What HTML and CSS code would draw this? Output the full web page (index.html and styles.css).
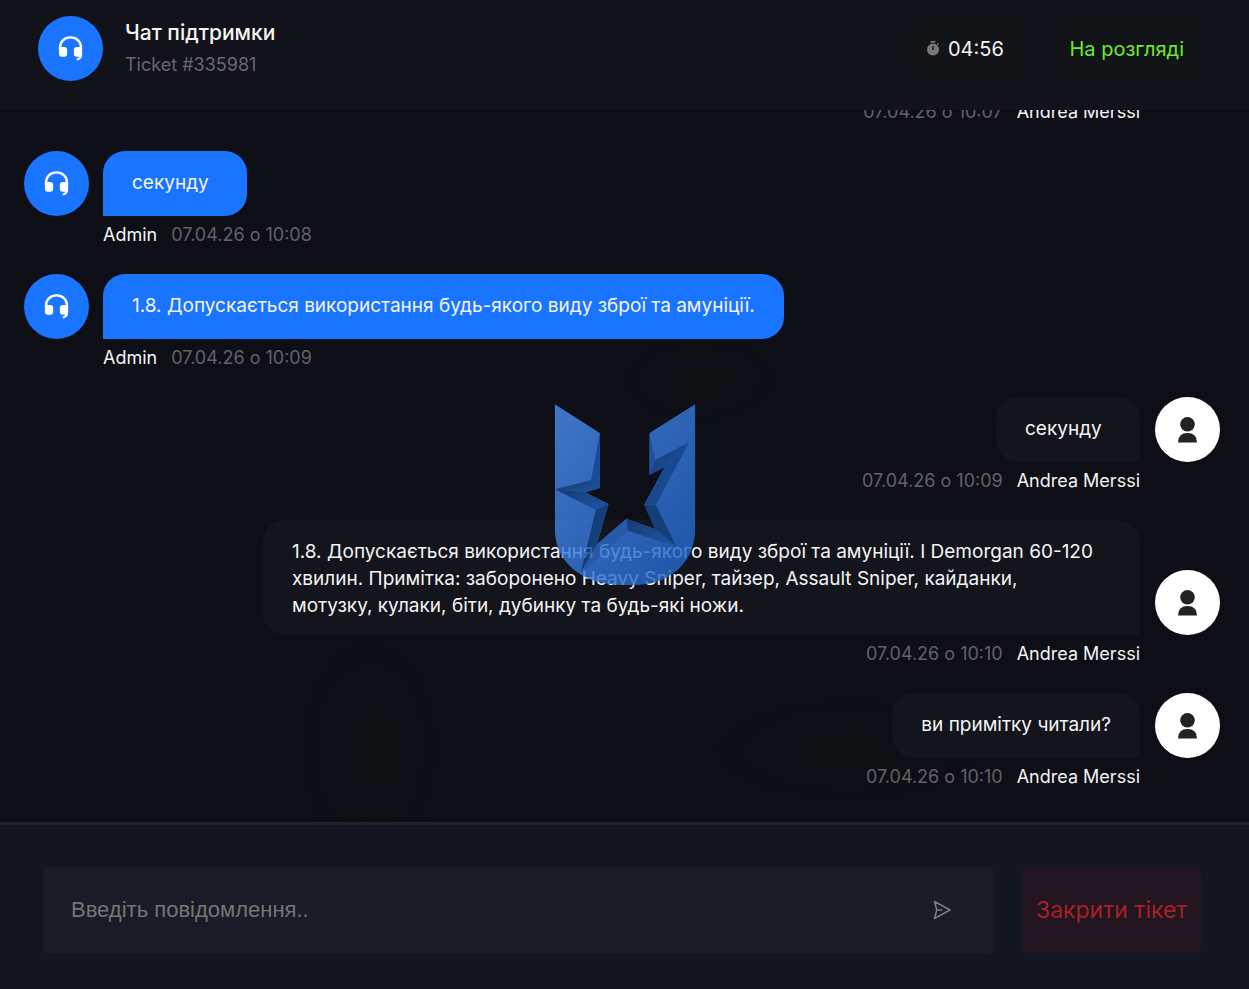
FILE: index.html
```
<!DOCTYPE html>
<html lang="uk">
<head>
  <meta charset="UTF-8" />
  <meta name="viewport" content="width=device-width, initial-scale=1.0"/>
  <title>Чат підтримки</title>
  <link rel="stylesheet" href="styles.css">
</head>
<body>

  <!-- Shared icons -->
  <svg class="sprite" aria-hidden="true">
    <symbol id="headset" viewBox="0 0 26 26">
      <path d="M2 14v-1.500C2 6 6.500 1.500 13 1.500S24 6 24 12.500V14" fill="none" stroke="#fff" stroke-width="2.400"/>
      <path d="M1 12.500q1-1 2.500-1H6.500q3 0 3 3v4q0 3-3 3H4q-3 0-3-3z" fill="#fff"/>
      <path d="M25 12.500q-1-1-2.500-1H19.500q-3 0-3 3v4q0 3 3 3h2.700q-.7 1.800-3 2l.5 2q5.500-.9 5.500-6.500z" fill="#fff"/>
    </symbol>
    <symbol id="user" viewBox="0 0 20 26">
      <circle cx="9.500" cy="7.300" r="7.300" fill="#222"/>
      <path d="M0 25.500q0-9.500 9.500-9.500t9.500 9.500z" fill="#222"/>
    </symbol>
  </svg>

  <div class="chat">
    <header class="header">
      <div class="avatar"><svg class="icon-headset"><use href="#headset"/></svg></div>
      <div class="header-text">
        <h1>Чат підтримки</h1>
        <p>Ticket #335981</p>
      </div>
      <div class="pill timer">
        <svg class="icon-timer" viewBox="0 0 12 15">
          <path d="M3.500 0h5v1.600h-5z" fill="#77777b"/>
          <path fill-rule="evenodd" d="M6 2.400a6 6 0 1 0 0 12a6 6 0 1 0 0-12zM5.300 5h1.400v4H5.300zM9.800 3l1-1l1.200 1.200l-1 1z" fill="#77777b"/>
        </svg>
        04:56
      </div>
      <div class="pill status">На розгляді</div>
    </header>

    <main class="messages">
      <div class="message mine">
        <div class="meta"><span>07.04.26 о 10:07</span><b>Andrea Merssi</b></div>
      </div>

      <div class="message">
        <div class="avatar"><svg class="icon-headset"><use href="#headset"/></svg></div>
        <div class="bubble">секунду</div>
        <div class="meta"><b>Admin</b><span>07.04.26 о 10:08</span></div>
      </div>

      <div class="message">
        <div class="avatar"><svg class="icon-headset"><use href="#headset"/></svg></div>
        <div class="bubble">1.8. Допускається використання будь-якого виду зброї та амуніції.</div>
        <div class="meta"><b>Admin</b><span>07.04.26 о 10:09</span></div>
      </div>

      <div class="message mine">
        <div class="avatar"><svg class="icon-user"><use href="#user"/></svg></div>
        <div class="bubble">секунду</div>
        <div class="meta"><span>07.04.26 о 10:09</span><b>Andrea Merssi</b></div>
      </div>

      <div class="message mine">
        <div class="avatar"><svg class="icon-user"><use href="#user"/></svg></div>
        <div class="bubble">1.8. Допускається використання будь-якого виду зброї та амуніції. I Demorgan 60-120 хвилин. Примітка: заборонено Heavy Sniper, тайзер, Assault Sniper, кайданки,<br>мотузку, кулаки, біти, дубинку та будь-які ножи.</div>
        <div class="meta"><span>07.04.26 о 10:10</span><b>Andrea Merssi</b></div>
      </div>

      <div class="message mine">
        <div class="avatar"><svg class="icon-user"><use href="#user"/></svg></div>
        <div class="bubble">ви примітку читали?</div>
        <div class="meta"><span>07.04.26 о 10:10</span><b>Andrea Merssi</b></div>
      </div>
    </main>

    <form class="footer">
      <div class="field">
        <input type="text" aria-label="Повідомлення" placeholder="Введіть повідомлення..">
        <button class="send" type="button" aria-label="Надіслати">
          <svg viewBox="0 0 18 20"><path d="M1.500 1.500L17 10L1.500 18.500L3.800 10zM3.800 10h5" fill="none" stroke="#777a82" stroke-width="1.600" stroke-linejoin="round" stroke-linecap="round"/></svg>
        </button>
      </div>
      <button class="close" type="button">Закрити тікет</button>
    </form>
  </div>

  <!-- Watermark over the chat -->
  <svg class="watermark" viewBox="0 0 423 546" aria-hidden="true">
    <defs>
      <linearGradient id="face" x1="0" y1="0" x2="1" y2="1">
        <stop offset="0" stop-color="#4c8cf0"/>
        <stop offset="1" stop-color="#2163c4"/>
      </linearGradient>
      <linearGradient id="edge" x1="0" y1="0" x2="1" y2="1">
        <stop offset="0" stop-color="#174585"/>
        <stop offset="1" stop-color="#2366c6"/>
      </linearGradient>
    </defs>
    <path d="M1 1L136 87V252L92 265L162 300L128 420L216 344L302 375L269 302L330 190L285 212V87L422 1V374C422 480 340 543 240 543H205C90 543 1 480 1 374z" fill="url(#face)"/>
    <path d="M136 87V252L110 228z" fill="#1d5bb5"/>
    <path d="M1 256L110 228L136 252L92 265z" fill="url(#edge)"/>
    <path d="M1 256L92 265L162 300L124 318z" fill="url(#edge)"/>
    <path d="M162 300L124 318L78 508L128 420z" fill="#174a8e"/>
    <path d="M78 508L128 420L216 344L220 380z" fill="#2a6bcb"/>
    <path d="M216 344L302 375L366 428L220 380z" fill="url(#edge)"/>
    <path d="M269 302L302 375L366 428L304 302z" fill="#174a8e"/>
    <path d="M269 302L330 190L404 114L304 302z" fill="#1c57ab"/>
    <path d="M404 114L330 190L285 212L302 168z" fill="url(#edge)"/>
    <path d="M285 87V212L302 168z" fill="#2362be"/>
  </svg>

</body>
</html>
```
FILE: styles.css
```
* {
  box-sizing: border-box;
}
body {
  margin: 0;
  background: #0d0e16;
  color: #f4f4f5;
  font-family: Inter, "Noto Sans", sans-serif;
  font-size: 19px;
}
h1, p {
  margin: 0;
}
button, input {
  border: none;
  font: inherit;
}
.sprite {
  position: absolute;
  width: 0;
  height: 0;
}
.chat {
  display: flex;
  flex-direction: column;
  height: 100vh;
}

/* Header */
.header {
  display: flex;
  align-items: center;
  flex: none;
  height: 110px;
  padding: 0 44px 13px 38px;
  background: #11121a;
}
.header-text {
  flex: 1;
  margin-left: 22px;
}
.header-text h1 {
  font-size: 21px;
  font-weight: 500;
  line-height: 32px;
}
.header-text p {
  color: #68686d;
  font-size: 18px;
  line-height: 32px;
}
.pill {
  display: flex;
  align-items: center;
  justify-content: center;
  height: 55px;
  padding: 0 21px;
  background: #131418;
  font-size: 20px;
}
.timer {
  gap: 9px;
  min-width: 124px;
  margin-right: 21px;
}
.status {
  min-width: 155px;
  color: #6cea30;
}

/* Avatars */
.avatar {
  display: flex;
  align-items: center;
  justify-content: center;
  flex: none;
  width: 65px;
  height: 65px;
  border-radius: 50%;
  background: #1975ff;
}
.icon-headset {
  width: 25px;
  height: 25px;
}
.icon-user {
  width: 20px;
  height: 26px;
}
.icon-timer {
  width: 12px;
  height: 15px;
}

/* Messages */
.messages {
  display: flex;
  flex-direction: column;
  justify-content: flex-end;
  flex: 1;
  gap: 27px;
  min-height: 0;
  padding: 0 29px 33px 24px;
  overflow: hidden;
  background:
    radial-gradient(ellipse 90px 50px at 700px 270px, #11120f66, transparent),
    radial-gradient(ellipse 80px 130px at 370px 640px, #11120f66, transparent),
    radial-gradient(ellipse 160px 60px at 850px 640px, #11120f66, transparent);
}
.message {
  display: grid;
  grid-template-columns: 65px auto;
  justify-content: start;
  flex: none;
  column-gap: 14px;
  row-gap: 6px;
}
.message .avatar {
  align-self: end;
}
.bubble {
  justify-self: start;
  min-width: 144px;
  max-width: 877px;
  min-height: 65px;
  padding: 18px 29px 16px;
  border-radius: 22px 22px 22px 0;
  background: #1975ff;
  line-height: 27px;
}
.meta {
  display: flex;
  grid-column: 2;
  gap: 14px;
  font-size: 18px;
  line-height: 25px;
}
.meta b {
  font-weight: 400;
}
.meta span {
  color: #626267;
}
.mine {
  grid-template-columns: auto 65px;
  justify-content: end;
  column-gap: 15px;
}
.mine .avatar {
  grid-column: 2;
  grid-row: 1;
  background: #fff;
}
.mine .bubble {
  grid-column: 1;
  grid-row: 1;
  justify-self: end;
  border-radius: 22px 22px 0 22px;
  background: #13141c;
}
.mine .meta {
  grid-column: 1;
  justify-content: flex-end;
}

/* Footer */
.footer {
  display: flex;
  flex: none;
  gap: 29px;
  padding: 42px 48px 36px 43px;
  border-top: 3px solid #20212c;
  background: #131520;
}
.field {
  display: flex;
  flex: 1;
  height: 86px;
  padding-right: 30px;
  border-radius: 3px;
  background: #191b26;
}
.field input {
  flex: 1;
  min-width: 0;
  padding: 0 28px;
  background: none;
  color: #f4f4f5;
  font-family: "Liberation Sans", Arial, sans-serif;
  font-size: 22px;
  outline: none;
}
.field input::placeholder {
  color: #757575;
  opacity: 1;
}
.send {
  display: flex;
  align-items: center;
  justify-content: center;
  width: 42px;
  padding: 0;
  background: none;
  cursor: pointer;
}
.send svg {
  width: 18px;
  height: 20px;
}
.close {
  width: 179px;
  padding: 0;
  border-radius: 6px;
  background: #22151f;
  color: #a62128;
  font-size: 23px;
  cursor: pointer;
}

/* Watermark */
.watermark {
  position: fixed;
  top: 50%;
  left: 50%;
  width: 141px;
  height: 182px;
  transform: translate(-50%, -50%);
  opacity: 0.82;
  pointer-events: none;
}
```
